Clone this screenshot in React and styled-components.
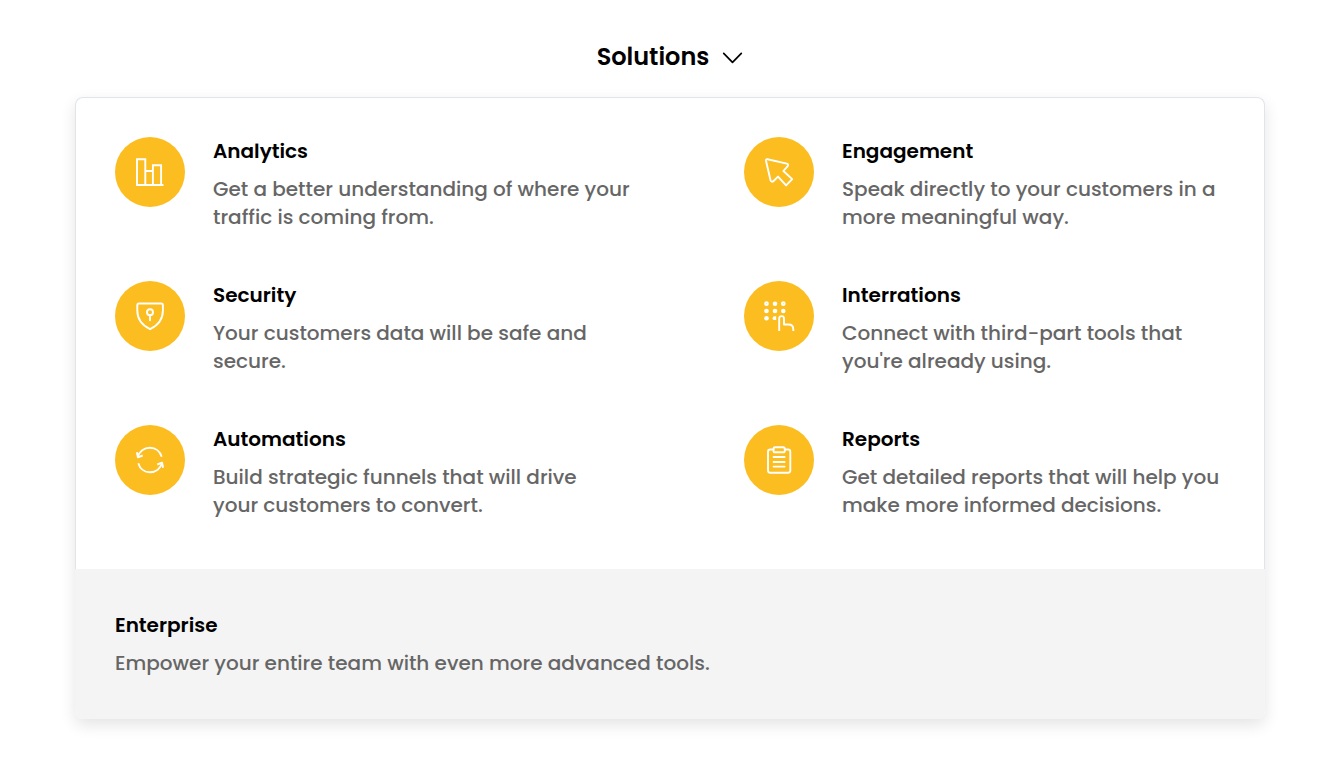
import React from "react";
import styled, { createGlobalStyle } from "styled-components";

const GlobalStyle = createGlobalStyle`
  *, *::before, *::after { box-sizing: border-box; }
  body {
    margin: 0;
    background: #fff;
    color: #000;
    font-family: Poppins, Inter, "Liberation Sans", sans-serif;
  }
`;

const Page = styled.main`
  display: flex;
  flex-direction: column;
  align-items: center;
  gap: 22px;
  padding: 39px 75px 40px;
`;

const Trigger = styled.button`
  display: flex;
  align-items: center;
  gap: 13px;
  padding: 0;
  border: 0;
  background: none;
  color: #000;
  font: inherit;
  font-size: 24px;
  font-weight: 600;
  line-height: 36px;
  cursor: pointer;
`;

const Panel = styled.nav`
  width: 100%;
  border-radius: 8px;
  box-shadow: 0 6px 16px rgba(0, 0, 0, 0.11);
`;

const Solutions = styled.ul`
  display: grid;
  grid-template-columns: 531fr 481fr;
  gap: 50px 98px;
  margin: 0;
  padding: 39px 39px 50px;
  list-style: none;
  background: #fff;
  border: 1px solid #e1e4ea;
  border-bottom: 0;
  border-radius: 8px 8px 0 0;
`;

const ItemLink = styled.a`
  display: flex;
  align-items: flex-start;
  gap: 28px;
  color: inherit;
  text-decoration: none;
`;

const Badge = styled.span`
  display: flex;
  flex: none;
  width: 70px;
  height: 70px;
  border-radius: 50%;
  background: #fbbd20;
`;

const Copy = styled.span`
  display: flex;
  flex-direction: column;
  gap: 10px;
`;

const Title = styled.span`
  font-size: 20px;
  font-weight: 600;
  line-height: 28px;
`;

const Text = styled.span`
  color: #666;
  font-size: 20px;
  font-weight: 500;
  line-height: 28px;
  white-space: pre-line;
`;

const Enterprise = styled.a`
  display: block;
  padding: 42px 40px;
  border-radius: 0 0 8px 8px;
  background: #f4f4f4;
  color: inherit;
  text-decoration: none;
`;

const Icon = ({ children }) => (
  <svg
    width="70"
    height="70"
    viewBox="0 0 70 70"
    fill="none"
    stroke="#fff"
    strokeWidth="1.9"
    strokeLinecap="round"
    strokeLinejoin="round"
    aria-hidden="true"
  >
    {children}
  </svg>
);

const ChartIcon = () => (
  <Icon>
    <path strokeLinecap="butt" strokeLinejoin="miter" d="M22 48.2V22.3h8.3v25.5M30.3 34h7.6M37.9 47.8V28.3h8.2v19.5M21.1 48h27.4" />
  </Icon>
);

const CursorIcon = () => (
  <Icon>
    <path d="M23.5 22.2l19.3 4.4c1.4.3 1.8 1.7.7 2.7L39.4 34l8.8 8.1-6.1 6.3-8.1-8.8-4.4 4.4c-1.2 1.2-2.7.8-3.1-.7l-4.5-19.6c-.2-1 .5-1.7 1.4-1.5z" />
  </Icon>
);

const ShieldIcon = () => (
  <Icon>
    <path d="M24 22.5h22.2c1 0 1.7.7 1.7 1.7v5.3c0 8.3-4.8 14.8-12.8 18.7-8-3.9-12.8-10.4-12.8-18.7v-5.3c0-1 .7-1.7 1.7-1.7z" />
    <circle cx="35" cy="31.2" r="3" />
    <path d="M35 34.3v5" />
  </Icon>
);

const KeypadIcon = () => (
  <Icon>
    <g fill="#fff" stroke="none">
      <circle cx="31" cy="22.7" r="2.3" />
      <circle cx="22.5" cy="30" r="2.3" />
      <circle cx="31" cy="30" r="2.3" />
      <circle cx="39.3" cy="30" r="2.3" />
      <circle cx="22.5" cy="37.3" r="2.3" />
      <path d="M32.2 35.3v3.8h-1.7a1.9 1.9 0 0 1 0-3.8z" />
    </g>
    <circle cx="22.5" cy="22.7" r="1.4" />
    <circle cx="39.3" cy="22.7" r="1.4" />
    <path strokeLinecap="butt" d="M35.2 50V37.5a2.4 2.4 0 0 1 4.8 0v6h4.5c3 0 4.8 1.8 4.8 4.7V50" />
  </Icon>
);

const SyncIcon = () => (
  <Icon>
    <path strokeLinecap="butt" d="M46.7 31.8c-1.6-5.6-6.3-9.1-11.8-9.1-5.8 0-10.5 3.7-12 9.2M23.3 38.2c1.6 5.6 6.2 9.1 11.7 9.1 5.8 0 10.5-3.7 12-9.2" />
    <path strokeLinecap="butt" d="M21.9 27.3l1 5 4.8-1.8M48.1 42.7l-1-5-4.8 1.8" />
  </Icon>
);

const ClipboardIcon = () => (
  <Icon>
    <path d="M29.5 24.5h-3.3c-1.2 0-2.2 1-2.2 2.2v18.9c0 1.2 1 2.2 2.2 2.2h17.9c1.2 0 2.2-1 2.2-2.2V26.7c0-1.2-1-2.2-2.2-2.2h-3.3" />
    <rect x="29.5" y="22.3" width="11.3" height="5" rx="1.6" />
    <path d="M29.6 32h11M29.6 37h11M29.6 41.6h11" />
  </Icon>
);

const Chevron = () => (
  <svg width="21" height="14" viewBox="0 0 21 14" fill="none" stroke="#000" strokeWidth="1.7" strokeLinecap="round" strokeLinejoin="round" aria-hidden="true">
    <path d="M1.7 3.4l8.8 8.9 8.8-8.9" />
  </svg>
);

const items = [
  { icon: ChartIcon, title: "Analytics", text: "Get a better understanding of where your\ntraffic is coming from." },
  { icon: CursorIcon, title: "Engagement", text: "Speak directly to your customers in a\nmore meaningful way." },
  { icon: ShieldIcon, title: "Security", text: "Your customers data will be safe and\nsecure." },
  { icon: KeypadIcon, title: "Interrations", text: "Connect with third-part tools that\nyou're already using." },
  { icon: SyncIcon, title: "Automations", text: "Build strategic funnels that will drive\nyour customers to convert." },
  { icon: ClipboardIcon, title: "Reports", text: "Get detailed reports that will help you\nmake more informed decisions." },
];

export default function App() {
  return (
    <>
      <GlobalStyle />
      <Page>
        <Trigger type="button" aria-expanded="true" aria-controls="solutions-menu">
          Solutions
          <Chevron />
        </Trigger>
        <Panel id="solutions-menu" aria-label="Solutions">
          <Solutions>
            {items.map(({ icon: ItemIcon, title, text }) => (
              <li key={title}>
                <ItemLink href="#">
                  <Badge>
                    <ItemIcon />
                  </Badge>
                  <Copy>
                    <Title>{title}</Title>
                    <Text>{text}</Text>
                  </Copy>
                </ItemLink>
              </li>
            ))}
          </Solutions>
          <Enterprise href="#">
            <Copy>
              <Title>Enterprise</Title>
              <Text>Empower your entire team with even more advanced tools.</Text>
            </Copy>
          </Enterprise>
        </Panel>
      </Page>
    </>
  );
}
